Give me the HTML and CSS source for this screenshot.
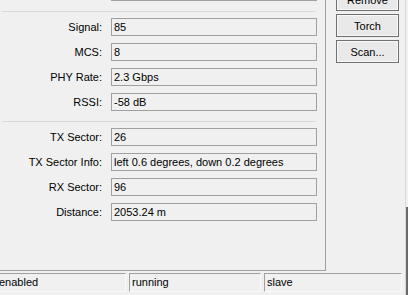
FILE: index.html
```html
<!DOCTYPE html>
<html lang="en">
<head>
    <meta charset="UTF-8">
    <meta name="viewport" content="width=device-width, initial-scale=1.0">
    <title>Wireless Status</title>
    <link rel="stylesheet" href="styles.css">
</head>
<body>
    <div class="window">
        <div class="main">
            <div class="panel">
                <div class="row first">
                    <span class="label"></span>
                    <div class="field"></div>
                </div>
                <div class="sep"></div>
                <div class="row"><span class="label">Signal:</span><div class="field">85</div></div>
                <div class="row"><span class="label">MCS:</span><div class="field">8</div></div>
                <div class="row"><span class="label">PHY Rate:</span><div class="field">2.3 Gbps</div></div>
                <div class="row"><span class="label">RSSI:</span><div class="field">-58 dB</div></div>
                <div class="sep"></div>
                <div class="row"><span class="label">TX Sector:</span><div class="field">26</div></div>
                <div class="row"><span class="label">TX Sector Info:</span><div class="field">left 0.6 degrees, down 0.2 degrees</div></div>
                <div class="row"><span class="label">RX Sector:</span><div class="field">96</div></div>
                <div class="row"><span class="label">Distance:</span><div class="field">2053.24 m</div></div>
            </div>
            <div class="buttons">
                <button type="button">Remove</button>
                <button type="button">Torch</button>
                <button type="button">Scan...</button>
            </div>
        </div>
        <div class="status">
            <div class="cell cell-a">enabled</div>
            <div class="cell cell-b">running</div>
            <div class="cell cell-c">slave</div>
        </div>
    </div>
    <div class="edge"></div>
</body>
</html>
```

FILE: styles.css
```css
body {
    margin: 0;
    padding: 0;
    width: 408px;
    height: 295px;
    overflow: hidden;
    background-color: #f0f0f0;
    font-family: "Liberation Sans", Arial, sans-serif;
    font-size: 11px;
    color: #000;
    position: relative;
}
.window {
    display: flex;
    flex-direction: column;
    height: 295px;
}
.main {
    display: flex;
    height: 271px;
}
.panel {
    display: flex;
    flex-direction: column;
    width: 325px;
    border-right: 1px solid #a0a0a0;
    border-bottom: 1px solid #a0a0a0;
    overflow: hidden;
}
.row {
    display: flex;
    align-items: center;
    flex-shrink: 0;
    height: 18px;
    margin-bottom: 7px;
}
.row.first {
    margin-top: -17px;
}
.label {
    width: 102px;
    text-align: right;
    margin-right: 9px;
    white-space: nowrap;
}
.field {
    width: 206px;
    height: 18px;
    box-sizing: border-box;
    border: 1px solid #a0a0a0;
    padding: 0 0 0 2px;
    line-height: 16px;
    white-space: nowrap;
    overflow: hidden;
}
.sep {
    flex-shrink: 0;
    margin: 3px 9px 6px 2px;
    height: 1px;
    background-color: #d9d9d9;
}
.buttons {
    display: flex;
    flex-direction: column;
    gap: 3px;
    margin-top: -12px;
    margin-left: 10px;
}
button {
    width: 63px;
    height: 23px;
    padding: 0;
    border: 1px solid #707070;
    box-shadow: inset 0 0 0 1px #f8f8f8;
    background-color: #e9e9e9;
    font-family: "Liberation Sans", Arial, sans-serif;
    font-size: 11px;
    color: #000;
}
.status {
    display: flex;
    gap: 3px;
    margin-top: 2px;
    height: 19px;
}
.cell {
    box-sizing: border-box;
    height: 19px;
    border-top: 1px solid #a0a0a0;
    border-left: 1px solid #a0a0a0;
    border-right: 1px solid #fafafa;
    border-bottom: 1px solid #fafafa;
    line-height: 17px;
    padding-left: 2px;
    white-space: nowrap;
}
.cell-a {
    width: 130px;
    margin-left: -4px;
}
.cell-b {
    width: 132px;
}
.cell-c {
    width: 138px;
}
.edge {
    position: absolute;
    top: 0;
    right: 0;
    width: 2px;
    height: 295px;
    border-left: 1px solid #d8d8d8;
}
.edge::after {
    content: "";
    position: absolute;
    top: 207px;
    left: 0;
    width: 2px;
    bottom: 0;
    background-color: #6a6a6a;
}
```
